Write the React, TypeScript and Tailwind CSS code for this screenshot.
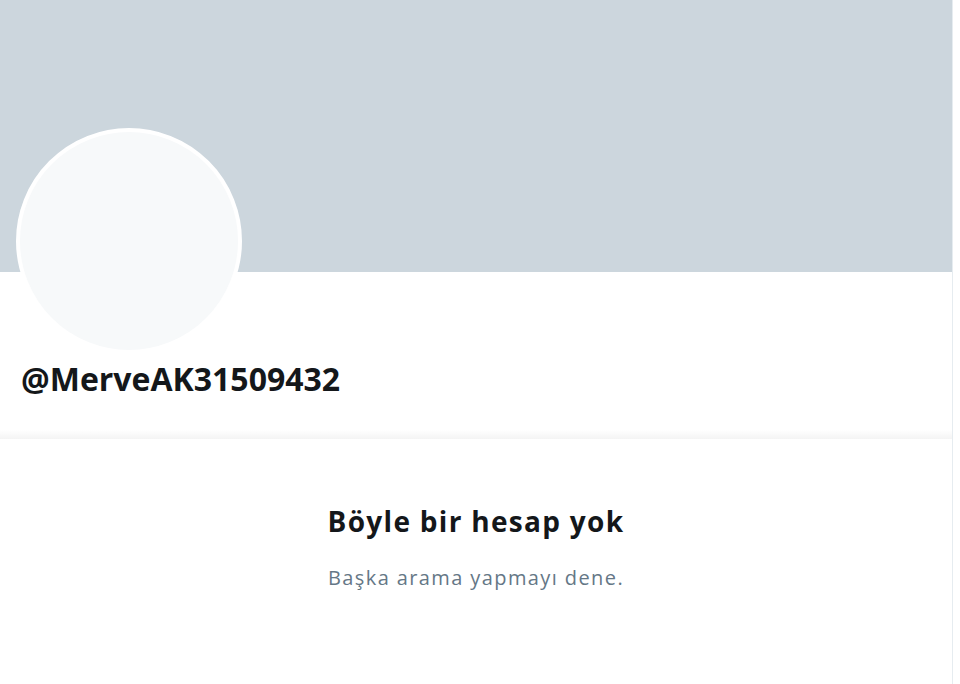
export default function App() {
  return (
    <div className="w-[960px] h-[684px] bg-white overflow-hidden flex" style={{ fontFamily: '"Open Sans", "Noto Sans", sans-serif' }}>
      <div className="w-[953px] flex flex-col border-r border-[#e6ecf0]">
        {/* Banner */}
        <div className="h-[272px] bg-[#ccd6dd] shrink-0" />

        {/* Profile */}
        <div className="relative px-[21px] pt-[87px] pb-[31px]">
          <div className="absolute left-[16px] top-[-144px] w-[226px] h-[226px] rounded-full bg-[#f7f9fa] border-[4px] border-white" />
          <div className="text-[32px] font-bold text-[#14171a] leading-[40px]">@MerveAK31509432</div>
        </div>

        <div className="h-[9px] bg-gradient-to-b from-white to-[#f4f4f4]" />

        {/* Empty state */}
        <div className="flex flex-col items-center pt-[64px]">
          <div className="text-[28px] font-bold text-[#14171a] leading-[36px] tracking-[1.3px]">Böyle bir hesap yok</div>
          <div className="mt-[25px] text-[20px] text-[#657786] leading-[28px] tracking-[1.4px]">Başka arama yapmayı dene.</div>
        </div>
      </div>
    </div>
  );
}
